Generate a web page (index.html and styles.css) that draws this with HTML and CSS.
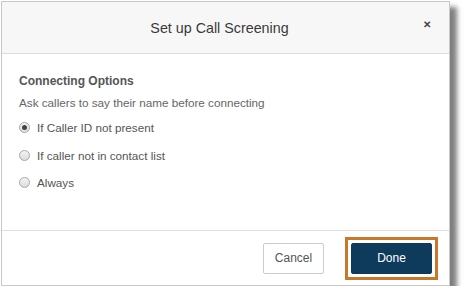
FILE: index.html
```html
<!DOCTYPE html>
<html>
<head>
<meta charset="utf-8">
<link rel="stylesheet" href="styles.css">
</head>
<body>
<div class="dialog">
  <div class="header">
    <div class="title">Set up Call Screening</div>
    <div class="close">&#x2715;</div>
  </div>
  <div class="content">
    <div class="section-title">Connecting Options</div>
    <div class="desc">Ask callers to say their name before connecting</div>
    <div class="options">
      <div class="option"><span class="radio checked"></span><span class="label">If Caller ID not present</span></div>
      <div class="option"><span class="radio"></span><span class="label">If caller not in contact list</span></div>
      <div class="option"><span class="radio"></span><span class="label">Always</span></div>
    </div>
  </div>
  <div class="footer">
    <button class="btn cancel">Cancel</button>
    <div class="highlight"><button class="btn done">Done</button></div>
  </div>
</div>
</body>
</html>
```
FILE: styles.css
```css
html, body { margin: 0; padding: 0; background: #fff; }
body { padding: 1px 0 0 1px; font-family: "Liberation Sans", Arial, sans-serif; }
.dialog {
  width: 447px;
  height: 283px;
  border: 1px solid #c8c8c8;
  background: #fff;
  box-shadow: 7px 6px 5px rgba(0,0,0,0.5);
  display: flex;
  flex-direction: column;
  box-sizing: content-box;
}
.header {
  height: 51px;
  background: #f7f7f7;
  border-bottom: 1px solid #dcdcdc;
  display: flex;
  align-items: center;
  justify-content: center;
  position: relative;
}
.title { font-size: 14.3px; color: #3a3a3a; margin-right: 12px; margin-top: 1px; }
.close {
  position: absolute;
  right: 18px;
  top: 17px;
  font-size: 10px;
  font-weight: bold;
  color: #444;
}
.content { flex: 1; padding: 20px 17px 0 17px; }
.section-title { font-size: 12px; font-weight: bold; color: #555; line-height: 14px; }
.desc { font-size: 11.7px; color: #666; margin-top: 8px; line-height: 14px; }
.options { margin-top: 4px; display: flex; flex-direction: column; }
.option { display: flex; align-items: center; height: 27.5px; }
.radio {
  width: 9px; height: 9px; border-radius: 50%;
  border: 1px solid #a8a8a8;
  background: linear-gradient(#f4f4f4, #dcdcdc);
  margin-right: 7px;
  display: flex; align-items: center; justify-content: center;
}
.radio.checked::after {
  content: ""; width: 5px; height: 5px; border-radius: 50%; background: #444;
}
.label { font-size: 11.7px; color: #555; }
.footer {
  height: 54px;
  border-top: 1px solid #e0e0e0;
  display: flex;
  justify-content: flex-end;
  align-items: center;
  padding-right: 11px;
  gap: 21px;
}
.btn {
  font-family: "Liberation Sans", Arial, sans-serif;
  font-size: 12px;
  height: 31px;
  border-radius: 2px;
  cursor: pointer;
}
.cancel {
  width: 61px;
  background: #fff;
  border: 1px solid #ccc;
  color: #555;
}
.highlight {
  border: 3px solid #c8782a;
  padding: 3px;
  display: flex;
}
.done {
  width: 81px;
  background: #0e3b5c;
  border: 1px solid #0e3b5c;
  color: #fff;
}
```
